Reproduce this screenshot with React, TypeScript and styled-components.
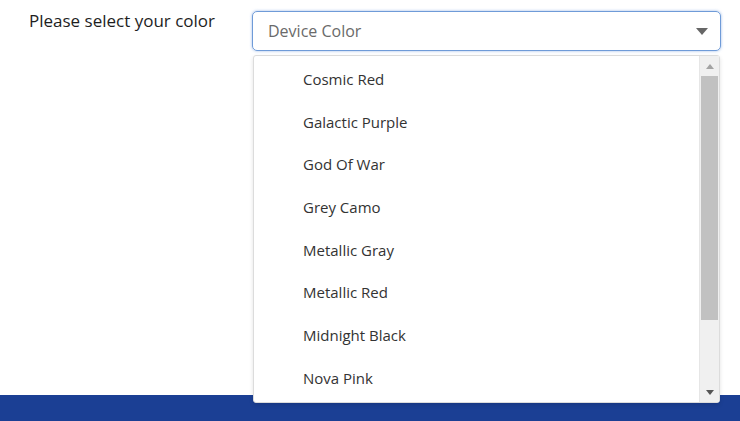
import React from 'react';
import styled, { createGlobalStyle } from 'styled-components';

const colors = [
  'Cosmic Red',
  'Galactic Purple',
  'God Of War',
  'Grey Camo',
  'Metallic Gray',
  'Metallic Red',
  'Midnight Black',
  'Nova Pink',
];

const GlobalStyle = createGlobalStyle`
  html, body {
    margin: 0;
    padding: 0;
    background: #fff;
    font-family: "Open Sans", "Noto Sans", sans-serif;
  }
`;

const Page = styled.div`
  width: 740px;
  height: 421px;
  display: flex;
  flex-direction: column;
  overflow: hidden;
`;

const Main = styled.div`
  flex: 1;
  display: flex;
  align-items: flex-start;
  padding: 10px 19px 0 29px;
`;

const Label = styled.div`
  width: 223px;
  font-size: 17px;
  line-height: 22px;
  color: #1e1e1e;
`;

const Field = styled.div`
  position: relative;
  flex: 1;
  margin-top: 1px;
`;

const SelectBox = styled.div`
  height: 40px;
  box-sizing: border-box;
  display: flex;
  align-items: center;
  justify-content: space-between;
  padding: 0 12px 0 15px;
  border: 1px solid #6f9bd8;
  border-radius: 5px;
  box-shadow: 0 0 3px rgba(90, 140, 215, 0.6);
  color: #6a6a6a;
  font-size: 16px;
`;

const Caret = styled.svg`
  width: 12px;
  height: 7px;
  fill: #666;
`;

const Menu = styled.div`
  position: absolute;
  top: 44px;
  left: 1px;
  right: 1px;
  height: 348px;
  box-sizing: border-box;
  display: flex;
  background: #fff;
  border: 1px solid #dcdcdc;
  border-radius: 3px;
  box-shadow: 0 2px 4px rgba(0, 0, 0, 0.12);
  z-index: 2;
`;

const Options = styled.ul`
  flex: 1;
  list-style: none;
  margin: 0;
  padding: 2px 0 0;
  overflow: hidden;
`;

const Option = styled.li`
  height: 42.7px;
  line-height: 42.7px;
  padding-left: 49px;
  font-size: 15px;
  color: #333;
`;

const Scrollbar = styled.div`
  width: 19px;
  display: flex;
  flex-direction: column;
  align-items: center;
  background: #f0f0f0;
  border-left: 1px solid #e6e6e6;
`;

const ScrollArrow = styled.div<{ $down?: boolean }>`
  height: 20px;
  display: flex;
  align-items: center;
  justify-content: center;

  svg {
    width: 8px;
    height: 5px;
    fill: ${(p) => (p.$down ? '#555' : '#a3a3a3')};
    transform: ${(p) => (p.$down ? 'none' : 'rotate(180deg)')};
  }
`;

const Thumb = styled.div`
  width: 17px;
  height: 244px;
  background: #c1c1c1;
`;

const Track = styled.div`
  flex: 1;
`;

const Footer = styled.div`
  height: 26px;
  background: #1b3f94;
`;

const Triangle = () => (
  <svg viewBox="0 0 8 5">
    <path d="M0 0h8L4 5z" />
  </svg>
);

export default function App() {
  return (
    <>
      <GlobalStyle />
      <Page>
        <Main>
          <Label>Please select your color</Label>
          <Field>
            <SelectBox>
              Device Color
              <Caret viewBox="0 0 12 7">
                <path d="M0 0h12L6 7z" />
              </Caret>
            </SelectBox>
            <Menu>
              <Options>
                {colors.map((c) => (
                  <Option key={c}>{c}</Option>
                ))}
              </Options>
              <Scrollbar>
                <ScrollArrow>
                  <Triangle />
                </ScrollArrow>
                <Thumb />
                <Track />
                <ScrollArrow $down>
                  <Triangle />
                </ScrollArrow>
              </Scrollbar>
            </Menu>
          </Field>
        </Main>
        <Footer />
      </Page>
    </>
  );
}
